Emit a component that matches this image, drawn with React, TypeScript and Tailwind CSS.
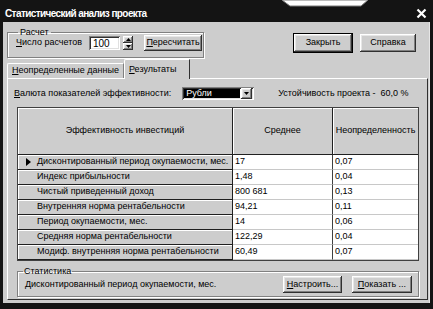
import React from "react";

const raised =
  "bg-[#cdcdcd] shadow-[inset_-1px_-1px_0_#303030,inset_1px_1px_0_#ffffff,inset_-2px_-2px_0_#808080,inset_2px_2px_0_#e6e6e6]";
const sunken =
  "bg-white shadow-[inset_1px_1px_0_#808080,inset_-1px_-1px_0_#ffffff,inset_2px_2px_0_#303030,inset_-2px_-2px_0_#e0e0e0]";

function Btn({ children, className = "" }: { children: React.ReactNode; className?: string }) {
  return (
    <div className={`flex items-center justify-center ${raised} ${className}`}>
      <span>{children}</span>
    </div>
  );
}

const rows = [
  ["Дисконтированный период окупаемости, мес.", "17", "0,07"],
  ["Индекс прибыльности", "1,48", "0,04"],
  ["Чистый приведенный доход", "800 681", "0,13"],
  ["Внутренняя норма рентабельности", "94,21", "0,11"],
  ["Период окупаемости, мес.", "14", "0,06"],
  ["Средняя норма рентабельности", "122,29", "0,04"],
  ["Модиф. внутренняя норма рентабельности", "60,49", "0,07"],
];

export default function App() {
  return (
    <div
      className="relative w-[433px] h-[309px] bg-[#141414] flex flex-col overflow-hidden text-[9px] text-black"
      style={{ fontFamily: '"Liberation Sans", Arial, sans-serif' }}
    >
      {/* window behind, peeking over the title bar */}
      <svg className="absolute left-0 top-0" width="433" height="10">
        <polygon points="282,0 368,0 361,6 290,6" fill="#ffffff" stroke="#7a7a7a" strokeWidth="1" />
      </svg>

      {/* Title bar */}
      <div className="h-[22px] flex items-center justify-between pl-[5px] pr-[6px] pt-[5px]">
        <span className="text-white font-bold text-[10px] tracking-[-0.6px]">Статистический анализ проекта</span>
        <svg width="11" height="11" viewBox="0 0 11 11">
          <path d="M1.5 1.5 L9.5 9.5 M9.5 1.5 L1.5 9.5" stroke="#ffffff" strokeWidth="2.2" />
        </svg>
      </div>

      {/* Body */}
      <div className="flex-1 mx-[3px] mb-[6px] bg-[#cdcdcd] flex flex-col border-r border-[#e6e6e6]">
        {/* top row */}
        <div className="h-[37px] flex items-start">
          <fieldset className="ml-[4px] mt-[5px] w-[197px] h-[31px] border border-[#808080] shadow-[1px_1px_0_#ffffff,inset_1px_1px_0_#ffffff]">
            <legend className="ml-[10px] px-[2px] leading-[10px]">Расчет</legend>
            <div className="flex items-center h-[16px] -mt-[2px] pl-[8px]">
              <span>
                <u>Ч</u>исло расчетов
              </span>
              <div className={`ml-[7px] w-[31px] h-[14px] ${sunken} flex items-center pl-[4px] text-[10px]`}>100</div>
              <div className="ml-[3px] w-[10px] h-[14px] flex flex-col">
                <div className={`flex-1 flex items-center justify-center ${raised}`}>
                  <svg width="5" height="3"><polygon points="2.5,0 5,3 0,3" fill="#000" /></svg>
                </div>
                <div className={`flex-1 flex items-center justify-center ${raised}`}>
                  <svg width="5" height="3"><polygon points="0,0 5,0 2.5,3" fill="#000" /></svg>
                </div>
              </div>
              <Btn className="ml-[11px] w-[58px] h-[16px]">
                <u>П</u>ересчитать
              </Btn>
            </div>
          </fieldset>
          <div className="ml-auto mt-[11px] mr-[13px] flex items-center gap-[7px]">
            <div className="border border-black">
              <Btn className="w-[58px] h-[18px]">Закрыть</Btn>
            </div>
            <Btn className="w-[56px] h-[18px]">Справка</Btn>
          </div>
        </div>

        {/* tabs */}
        <div className="h-[19px] flex items-end pl-[4px]">
          <div className="h-[15px] w-[117px] px-[4px] flex items-center border-t border-l border-white border-r border-r-[#808080] rounded-tl-[2px]">
            <span>
              <u>Н</u>еопределенные данные
            </span>
          </div>
          <div className="relative z-10 h-[20px] -mb-[1px] w-[66px] px-[4px] flex items-center bg-[#cdcdcd] border-t border-l border-white border-r border-r-[#303030] rounded-tl-[2px]">
            <span>
              <u>Р</u>езультаты
            </span>
          </div>
        </div>

        {/* tab panel */}
        <div className="ml-[4px] w-[421px] h-[222px] border border-t-white border-l-white border-r-[#303030] border-b-[#303030] flex flex-col">
          <div className="mt-[8px] h-[13px] flex items-center">
            <span className="ml-[6px]">
              <u>В</u>алюта показателей эффективности:
            </span>
            <div className={`ml-[11px] w-[72px] h-[13px] ${sunken} flex items-center p-[2px]`}>
              <div className="flex-1 h-full bg-black text-white flex items-center pl-[2px] leading-none">Рубли</div>
              <div className={`w-[11px] h-[11px] -my-[1px] ml-[1px] flex items-center justify-center ${raised}`}>
                <svg width="5" height="3"><polygon points="0,0 5,0 2.5,3" fill="#000" /></svg>
              </div>
            </div>
            <span className="ml-[24px]">Устойчивость проекта -&nbsp;&nbsp;60,0 %</span>
          </div>

          {/* grid */}
          <div className="mt-[7px] ml-[9px] w-[402px] border border-[#404040] bg-white">
            <div className="grid grid-cols-[215px_100px_85px]">
              <div className="h-[47px] flex items-center justify-center bg-[#cdcdcd] border-r border-b border-[#202020] shadow-[inset_1px_1px_0_#ffffff]">
                Эффективность инвестиций
              </div>
              <div className="h-[47px] flex items-center justify-center bg-[#cdcdcd] border-r border-b border-[#202020] shadow-[inset_1px_1px_0_#ffffff]">
                Среднее
              </div>
              <div className="h-[47px] flex items-center justify-center bg-[#cdcdcd] border-b border-[#202020] shadow-[inset_1px_1px_0_#ffffff] whitespace-nowrap">
                Неопределенность
              </div>
              {rows.map(([label, avg, unc], i) => (
                <React.Fragment key={label}>
                  <div className="h-[15px] flex items-center bg-[#cdcdcd] border-r border-b border-[#202020] shadow-[inset_1px_1px_0_#ffffff] whitespace-nowrap">
                    <div className="w-[19px] flex justify-center pl-[2px]">
                      {i === 0 && (
                        <svg width="5" height="8"><polygon points="0,0 5,4 0,8" fill="#000" /></svg>
                      )}
                    </div>
                    <span>{label}</span>
                  </div>
                  <div className="h-[15px] flex items-center pl-[2px] border-r border-[#404040] border-b border-b-[#c8c8c8]">{avg}</div>
                  <div className="h-[15px] flex items-center pl-[2px] border-b border-[#c8c8c8]">{unc}</div>
                </React.Fragment>
              ))}
            </div>
          </div>

          {/* statistics */}
          <fieldset className="mt-[5px] ml-[9px] w-[402px] h-[31px] border border-[#808080] shadow-[1px_1px_0_#ffffff,inset_1px_1px_0_#ffffff]">
            <legend className="ml-[5px] px-[1px] leading-[10px]">Статистика</legend>
            <div className="flex items-center h-[17px] pl-[7px] pr-[6px]">
              <span>Дисконтированный период окупаемости, мес.</span>
              <Btn className="ml-auto w-[59px] h-[17px]">
                <u>Н</u>астроить...
              </Btn>
              <Btn className="ml-[10px] w-[60px] h-[17px]">
                <u>П</u>оказать ...
              </Btn>
            </div>
          </fieldset>
        </div>
      </div>
    </div>
  );
}
